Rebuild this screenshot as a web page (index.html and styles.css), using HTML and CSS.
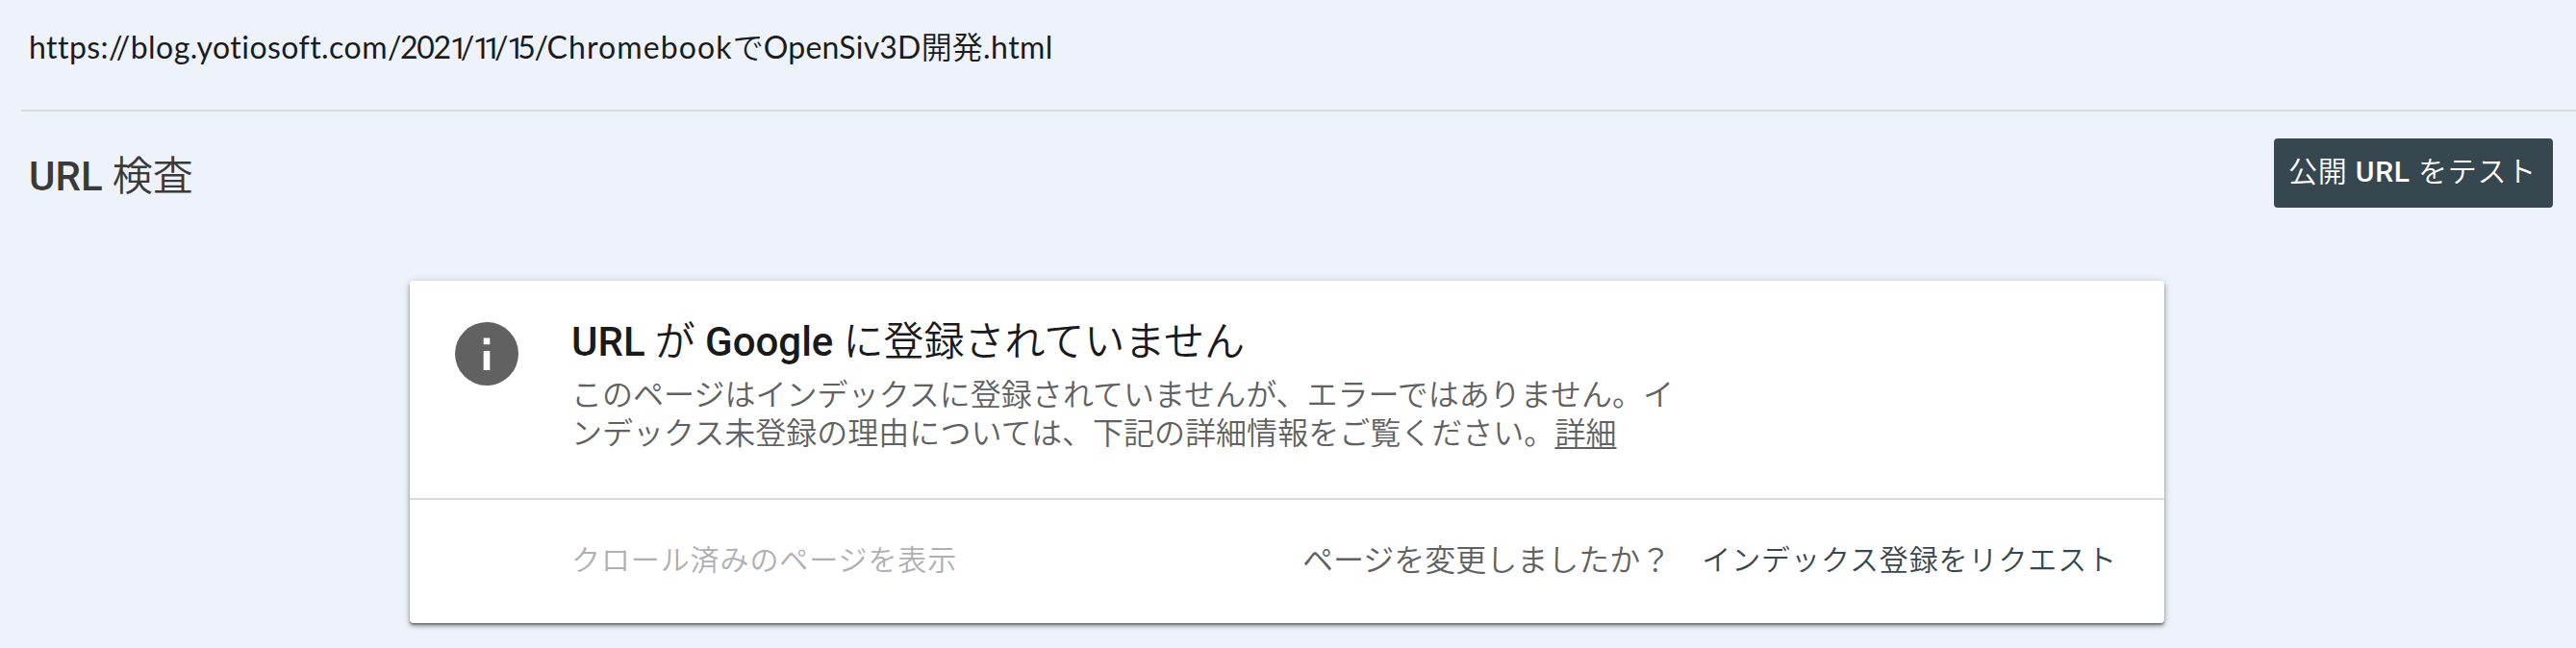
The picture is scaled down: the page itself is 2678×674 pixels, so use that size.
FILE: index.html
```html
<!DOCTYPE html>
<html lang="ja">
<head>
<meta charset="utf-8">
<title>URL 検査</title>
<link rel="stylesheet" href="styles.css">
</head>
<body>
<header class="url-bar"><span class="url"><span class="host">https://blog.yotiosoft.com</span><span class="date">/202<span class="one">1</span>/<span class="one">11</span>/<span class="one">1</span>5/</span><span class="slug">Chromebook</span><span class="jp">で</span>OpenSiv3D<span class="jp">開発</span><span class="host">.html</span></span></header>
<section class="toolbar">
  <h1 class="page-title"><b>URL</b> 検査</h1>
  <button class="test-button">公開 <b>URL</b> をテスト</button>
</section>
<main class="card">
  <section class="verdict">
    <svg class="info-icon" viewBox="0 0 66 66"><circle cx="33" cy="33" r="33" fill="#616161"/><path d="M29.7 16.5h6.6v6.8h-6.6zM29.7 30h6.6v20h-6.6z" fill="#fff"/></svg>
    <div class="verdict-text">
      <h2 class="verdict-title"><b>URL</b> が <b>Google</b> に登録されていません</h2>
      <p class="description">このページはインデックスに登録されていませんが、エラーではありません。イ<br>ンデックス未登録の理由については、下記の詳細情報をご覧ください。<a class="more">詳細</a></p>
    </div>
  </section>
  <footer class="actions">
    <span class="action disabled">クロール済みのページを表示</span>
    <span class="question">ページを変更しましたか？</span>
    <span class="action request">インデックス登録をリクエスト</span>
  </footer>
</main>
</body>
</html>
```
FILE: styles.css
```css
* { box-sizing: border-box; margin: 0; }
body {
  height: 674px;
  overflow: hidden;
  background: #eef3fb;
  font-family: Roboto, "Noto Sans CJK JP", sans-serif;
  font-weight: 350;
  color: #616161;
  white-space: nowrap;
}
b { font-weight: 500; }
.url-bar {
  height: 116px;
  margin-left: 22px;
  padding: 25px 0 0 8px;
  border-bottom: 2px solid #dadada;
}
.url {
  display: block;
  font: 400 32px/48px Lato, "Noto Sans CJK JP", sans-serif;
  font-variant-ligatures: none;
  letter-spacing: .2px;
  color: #1b1c1c;
}
.host { letter-spacing: .45px; }
.date { letter-spacing: -1.3px; }
.one { font-family: Roboto, sans-serif; letter-spacing: -7px; }
.slug { letter-spacing: 1.1px; }
.jp { font-weight: 350; }
.toolbar {
  display: flex;
  justify-content: space-between;
  height: 176px;
  padding: 28px 24px 0 30px;
}
.page-title {
  padding-top: 10px;
  font: 350 42px/60px Roboto, "Noto Sans CJK JP", sans-serif;
  color: #3a3a3a;
}
.test-button {
  width: 290px;
  height: 72px;
  padding: 0 0 2px 15px;
  border: 0;
  border-radius: 4px;
  background: #37474f;
  color: #fff;
  font: 350 30px/70px Roboto, "Noto Sans CJK JP", sans-serif;
  letter-spacing: .8px;
  text-align: left;
  white-space: nowrap;
}
.card {
  width: 1824px;
  height: 356px;
  margin-left: 426px;
  border-radius: 4px;
  background: #fff;
  box-shadow: 0 3px 4px rgba(0,0,0,.35), 0 1px 10px rgba(0,0,0,.16), 0 2px 1px rgba(0,0,0,.2);
}
.verdict {
  display: flex;
  gap: 55px;
  height: 228px;
  padding: 34px 0 0 47px;
  border-bottom: 2px solid #dadada;
}
.info-icon { width: 66px; height: 66px; margin-top: 9px; }
.verdict-title {
  font: 350 42px/60px Roboto, "Noto Sans CJK JP", sans-serif;
  color: #1a1a1a;
}
.description { font-size: 32px; line-height: 40px; padding-top: 5px; letter-spacing: .03px; }
.more { text-decoration: underline; text-underline-offset: 3px; text-decoration-thickness: 2px; }
.actions {
  display: flex;
  align-items: center;
  height: 128px;
  padding: 0 49px 8px 168px;
}
.action { font-size: 30px; letter-spacing: .9px; }
.disabled { color: #b0b0b0; }
.question { margin-left: auto; margin-right: 32px; font-size: 32px; }
.request { color: #37474f; }
```
